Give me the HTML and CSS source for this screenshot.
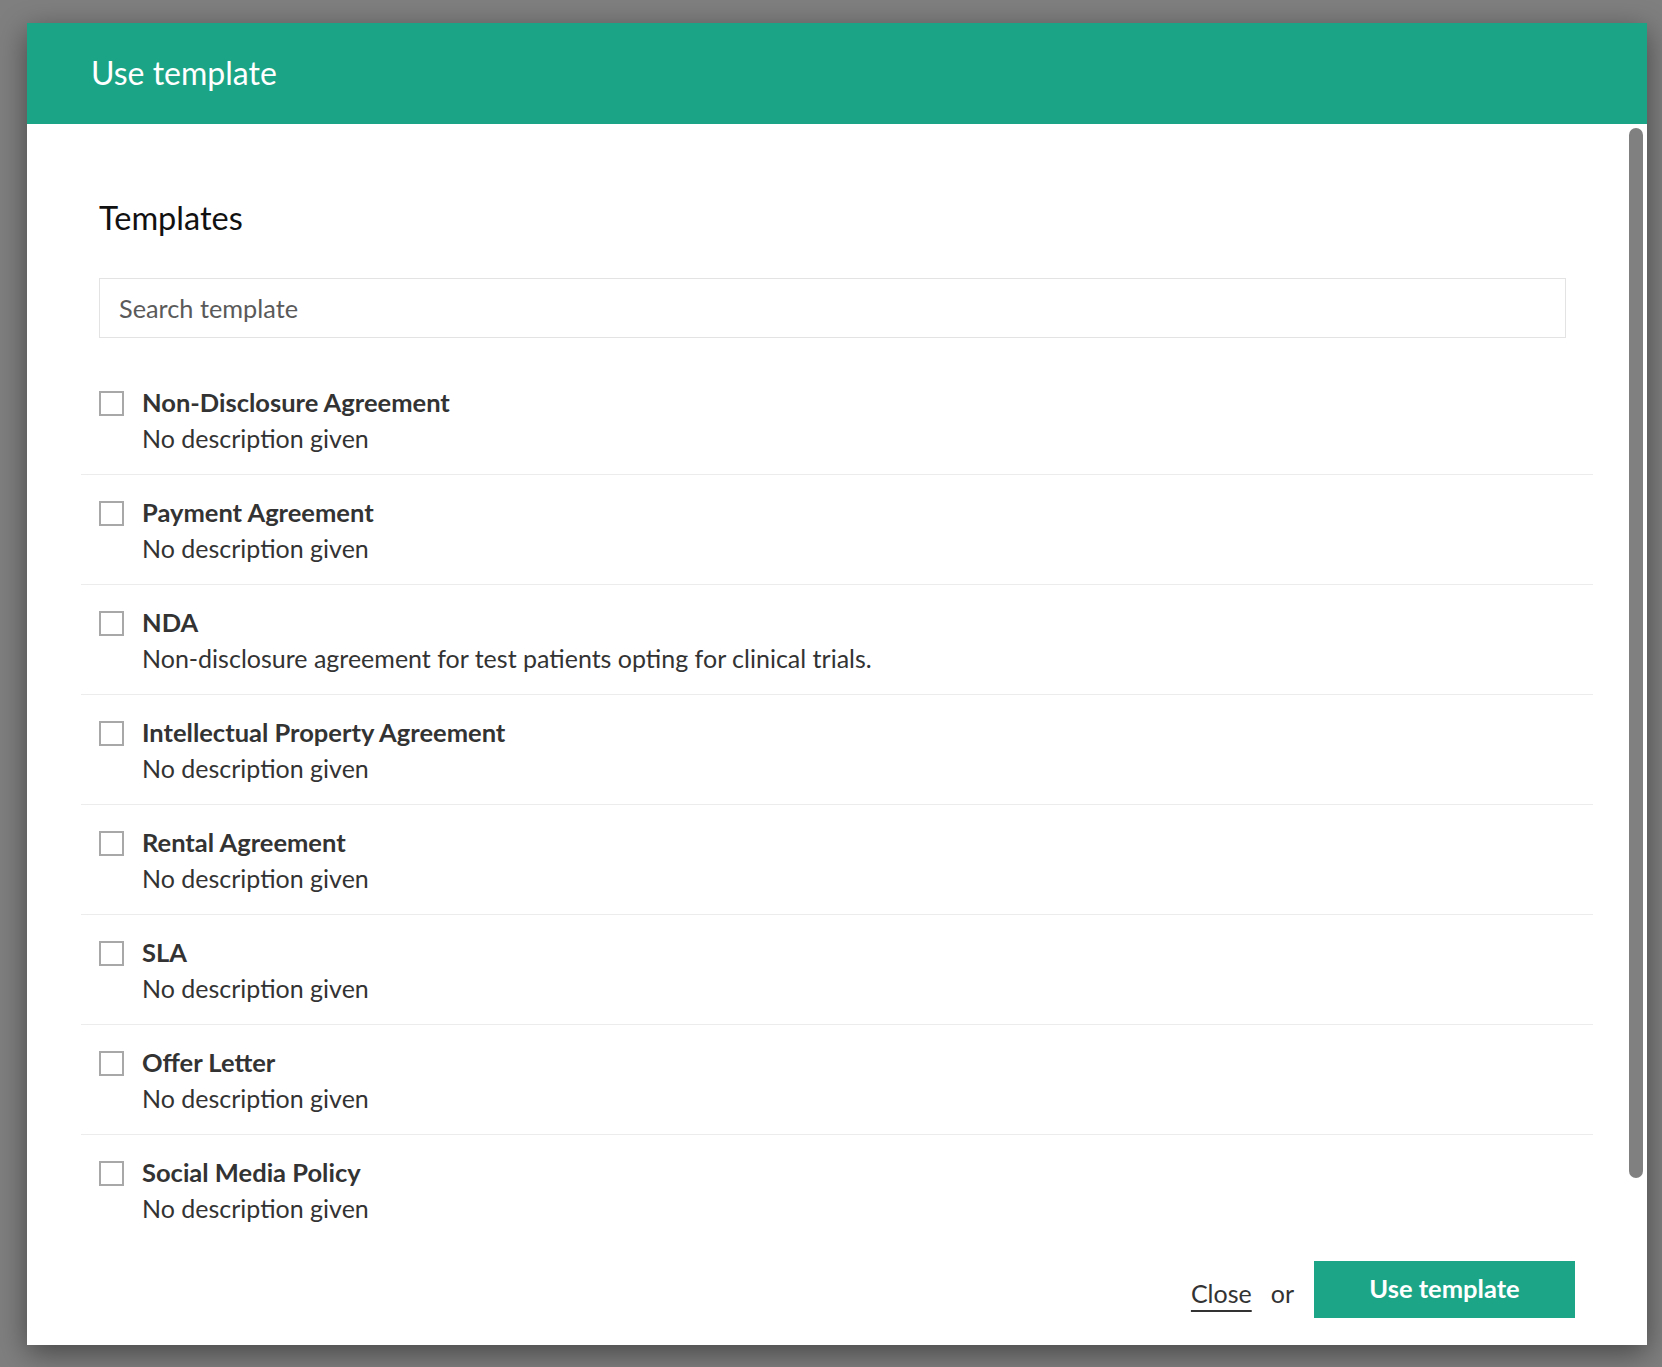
FILE: index.html
```html
<!DOCTYPE html>
<html lang="en">
<head>
<meta charset="utf-8">
<title>Use template</title>
<link rel="stylesheet" href="styles.css">
</head>
<body>
<div class="modal">
  <div class="modal-header">Use template</div>
  <div class="modal-body">
    <h2 class="section-title">Templates</h2>
    <input class="search" type="text" placeholder="Search template">
    <ul class="template-list">
      <li class="item"><span class="checkbox"></span><div class="text"><div class="name">Non-Disclosure Agreement</div><div class="desc">No description given</div></div></li>
      <li class="item"><span class="checkbox"></span><div class="text"><div class="name">Payment Agreement</div><div class="desc">No description given</div></div></li>
      <li class="item"><span class="checkbox"></span><div class="text"><div class="name">NDA</div><div class="desc">Non-disclosure agreement for test patients opting for clinical trials.</div></div></li>
      <li class="item"><span class="checkbox"></span><div class="text"><div class="name">Intellectual Property Agreement</div><div class="desc">No description given</div></div></li>
      <li class="item"><span class="checkbox"></span><div class="text"><div class="name">Rental Agreement</div><div class="desc">No description given</div></div></li>
      <li class="item"><span class="checkbox"></span><div class="text"><div class="name">SLA</div><div class="desc">No description given</div></div></li>
      <li class="item"><span class="checkbox"></span><div class="text"><div class="name">Offer Letter</div><div class="desc">No description given</div></div></li>
      <li class="item last"><span class="checkbox"></span><div class="text"><div class="name">Social Media Policy</div><div class="desc">No description given</div></div></li>
    </ul>
    <div class="list-thumb"></div>
  </div>
  <div class="modal-footer">
    <a class="close-link" href="#">Close</a>
    <span class="or">or</span>
    <button class="primary-btn" type="button">Use template</button>
  </div>
  <div class="body-thumb"></div>
</div>
</body>
</html>
```
FILE: styles.css
```css
html, body {
  margin: 0;
  padding: 0;
  background: #7f7f7f;
  height: 100%;
  overflow: hidden;
  font-family: Lato, "Noto Sans", sans-serif;
}

.modal {
  position: relative;
  margin: 23px 0 0 27px;
  width: 1620px;
  height: 1322px;
  background: #ffffff;
  box-shadow: 0 8px 28px rgba(0, 0, 0, 0.45);
  display: flex;
  flex-direction: column;
}

.modal-header {
  height: 101px;
  flex: none;
  background: #1ba586;
  color: #ffffff;
  font-size: 32px;
  display: flex;
  align-items: center;
  padding-left: 64px;
  padding-bottom: 2px;
  box-sizing: border-box;
}

.modal-body {
  position: relative;
  padding: 0 81px 0 72px;
}

.section-title {
  margin: 74px 0 0 0;
  font-size: 32.5px;
  line-height: 40px;
  font-weight: 400;
  color: #111111;
}

.search {
  display: block;
  box-sizing: border-box;
  width: 100%;
  height: 60px;
  margin-top: 40px;
  border: 1px solid #e3e3e3;
  padding: 0 19px;
  font-family: Lato, "Noto Sans", sans-serif;
  font-size: 25.3px;
  color: #333;
  outline: none;
}

.search::placeholder {
  color: #5a5a5a;
}

.template-list {
  list-style: none;
  margin: 27px -27px 0 -18px;
  padding: 0;
  height: 870px;
  overflow: hidden;
}

.item {
  display: flex;
  align-items: flex-start;
  padding: 19px 0 18px 18px;
  border-bottom: 1px solid #ececec;
}

.item.last {
  border-bottom: none;
}

.checkbox {
  flex: none;
  width: 25px;
  height: 25px;
  box-sizing: border-box;
  border: 2px solid #a8a8a8;
  margin-top: 7px;
  margin-right: 18px;
}

.text {
  color: #333333;
  font-size: 25px;
  line-height: 36px;
}

.name {
  font-weight: 700;
  font-size: 25.5px;
}

.desc {
  font-weight: 400;
}

.list-thumb {
  position: absolute;
  top: 242px;
  right: 4px;
  width: 10px;
  height: 35px;
  border-radius: 5px;
  background: #d0d0d0;
}

.modal-footer {
  display: flex;
  justify-content: flex-end;
  align-items: center;
  gap: 19px;
  padding: 26px 72px 0 0;
}

.close-link {
  color: #333333;
  font-size: 25px;
  text-decoration: underline;
  text-decoration-thickness: 1.5px;
  text-underline-offset: 7px;
  margin-top: 7px;
}

.or {
  color: #333333;
  font-size: 25px;
  margin-top: 7px;
}

.primary-btn {
  width: 261px;
  height: 57px;
  border: none;
  background: #1ca687;
  color: #ffffff;
  font-family: Lato, "Noto Sans", sans-serif;
  font-size: 25.5px;
  font-weight: 700;
  margin-left: 1px;
  padding: 0 0 3px 0;
  cursor: pointer;
}

.body-thumb {
  position: absolute;
  top: 105px;
  right: 4px;
  width: 14px;
  height: 1050px;
  border-radius: 7px;
  background: #808080;
}
```
